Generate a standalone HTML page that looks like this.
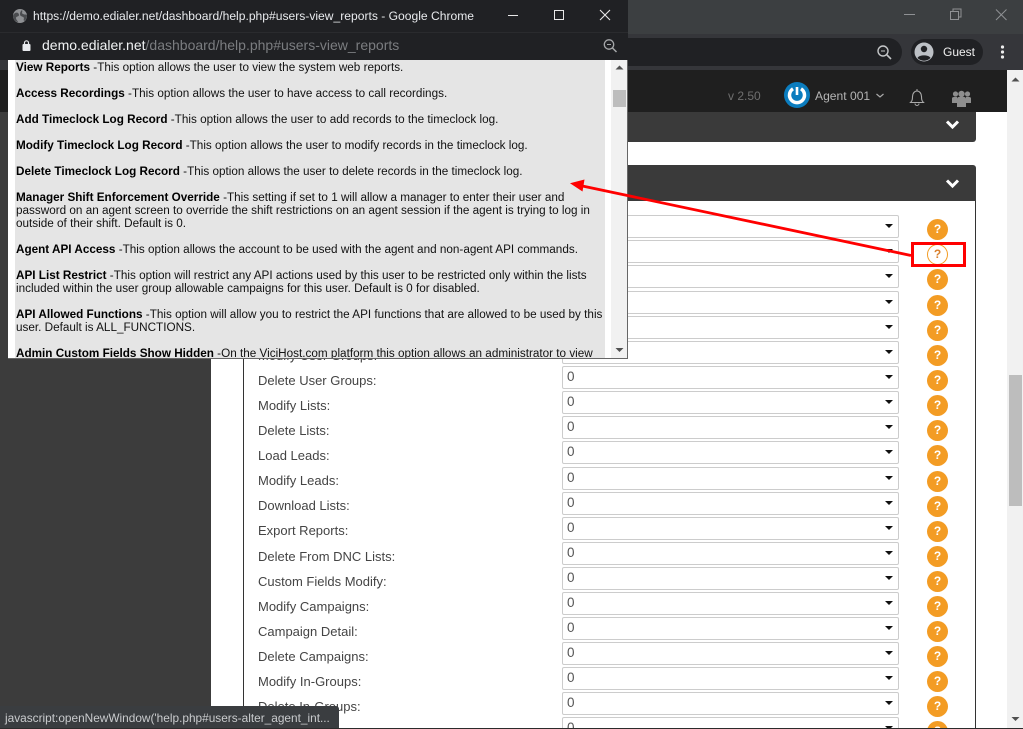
<!DOCTYPE html>
<html><head><meta charset="utf-8"><title>Help</title>
<style>
html,body{margin:0;padding:0;width:1023px;height:729px;overflow:hidden;background:#fff}
#w{position:absolute;left:0;top:0;width:1023px;height:729px;overflow:hidden;background:#fff}
#w div,#w span,#w svg{position:absolute}
.lb{left:258px;font:13px/16px "Liberation Sans",sans-serif;color:#444;white-space:nowrap;height:16px}
.sl{left:562px;width:335px;height:21px;border:1px solid #ccc;border-radius:2px;background:#fff;font:13.5px/20px "Liberation Sans",sans-serif;color:#555}
.sl b{position:absolute;left:4px;top:0;font-weight:normal}
.sl i{position:absolute;right:5px;top:8px;width:0;height:0;border-left:4px solid transparent;border-right:4px solid transparent;border-top:4px solid #111}
.q{left:927px;width:21px;height:21px;border-radius:50%;background:#f39c24;color:#fff;font:bold 12px/21px "Liberation Sans",sans-serif;text-align:center}
.p{left:1px;font:11.72px/13px "Liberation Sans",sans-serif;color:#111;white-space:nowrap}
.p strong{font-weight:bold;color:#000}
.chrome{font-family:"Liberation Sans",sans-serif;white-space:nowrap}
</style></head><body><div id="w">

<!-- main window chrome -->
<div style="left:0;top:0;width:1023px;height:34px;background:#3c3f41"></div>
<div style="left:0;top:34px;width:1023px;height:36px;background:#35363a"></div>
<div style="left:600px;top:38px;width:302px;height:28px;background:#202124;border-radius:14px"></div>
<div style="left:911px;top:39px;width:72px;height:26px;background:#202124;border-radius:13px"></div>
<svg style="left:0;top:0" width="1023" height="70" viewBox="0 0 1023 70" fill="none">
<path d="M904 14.500h11" stroke="#8f9194" stroke-width="1"/>
<path d="M950.500 11.500h8v8h-8zM953 11.500v-2.500h8v8h-2.500" stroke="#8f9194" stroke-width="1"/>
<path d="M996 9.500l10.500 10.500M1006.500 9.500L996 20" stroke="#8f9194" stroke-width="1"/>
<circle cx="883" cy="51" r="5" stroke="#c4c6c8" stroke-width="1.400"/><path d="M887 55l4 4" stroke="#c4c6c8" stroke-width="1.600"/><path d="M881 51h4" stroke="#c4c6c8"/>
<circle cx="924" cy="52" r="9.500" fill="#bdc1c6"/><circle cx="924" cy="49" r="3.200" fill="#202124"/><path d="M917.500 58c1.500-3.500 11.500-3.500 13 0a9 9 0 0 1-13 0z" fill="#202124"/>
<circle cx="1002.500" cy="47" r="1.600" fill="#eee"/><circle cx="1002.500" cy="52" r="1.600" fill="#eee"/><circle cx="1002.500" cy="57" r="1.600" fill="#eee"/>
</svg>
<div class="chrome" style="left:943px;top:44px;font-size:12px;line-height:16px;color:#f0f0f0">Guest</div>

<!-- app header -->
<div style="left:0;top:70px;width:1007px;height:42px;background:#1f1f1f"></div>
<div class="chrome" style="left:728px;top:88px;font-size:12px;line-height:16px;color:#6f6f6f">v 2.50</div>
<svg style="left:784px;top:82px" width="26" height="26" viewBox="0 0 26 26" fill="none">
<circle cx="13" cy="13" r="13" fill="#0b7dbf"/>
<path d="M9 6.800a7.500 7.500 0 1 0 8 0" stroke="#fff" stroke-width="3.500"/><path d="M13 5v8" stroke="#fff" stroke-width="2.600"/>
</svg>
<div class="chrome" style="left:815px;top:88px;font-size:12.100px;line-height:16px;color:#b5b5b5">Agent 001</div>
<svg style="left:875px;top:92px" width="10" height="8" viewBox="0 0 10 8" fill="none"><path d="M1.500 2l3.500 3 3.500-3" stroke="#aaa" stroke-width="1.200"/></svg>
<svg style="left:908px;top:88px" width="18" height="19" viewBox="0 0 18 19" fill="none">
<path d="M2.500 14.500c1.500-1.500 2-2.500 2-6 0-3 2-5.500 4.500-5.500s4.500 2.500 4.500 5.500c0 3.500.5 4.500 2 6z" stroke="#aaa" stroke-width="1.100"/>
<path d="M7 15.500a2 2 0 0 0 4 0" stroke="#aaa"/><path d="M9 1v2" stroke="#aaa"/>
</svg>
<svg style="left:952px;top:90px" width="19" height="17" viewBox="0 0 19 17" fill="#8e8e8e">
<circle cx="3.500" cy="4" r="2.600"/><circle cx="15.500" cy="4" r="2.600"/><circle cx="9.500" cy="4" r="3.200"/>
<path d="M0 8.500q0-1.500 2-1.500h3v6H0zM14 7h3q2 0 2 1.500V13h-5z"/><path d="M5 9q0-2 2-2h5q2 0 2 2v8H5z"/>
</svg>

<!-- sidebar -->
<div style="left:0;top:112px;width:211px;height:617px;background:#3c3c3c"></div>

<!-- panels -->
<div style="left:244px;top:112px;width:732px;height:30px;background:#3a3a3a;border-radius:0 0 3px 3px"></div>
<svg style="left:945px;top:119px" width="15" height="11" viewBox="0 0 15 11" fill="none"><path d="M2 2.500l5.500 5.500 5.500-5.500" stroke="#fff" stroke-width="3"/></svg>
<div style="left:243px;top:165px;width:733px;height:36px;background:#3a3a3a;border-radius:3px 3px 0 0"></div>
<svg style="left:945px;top:178px" width="15" height="11" viewBox="0 0 15 11" fill="none"><path d="M2 2.500l5.500 5.500 5.500-5.500" stroke="#fff" stroke-width="3"/></svg>
<div style="left:243px;top:201px;width:1px;height:528px;background:#333"></div>
<div style="left:975px;top:201px;width:1px;height:528px;background:#333"></div>

<!-- labels -->
<div class="lb" style="top:348px">Modify User Groups:</div>
<div class="lb" style="top:373px">Delete User Groups:</div>
<div class="lb" style="top:398px">Modify Lists:</div>
<div class="lb" style="top:423px">Delete Lists:</div>
<div class="lb" style="top:448px">Load Leads:</div>
<div class="lb" style="top:473px">Modify Leads:</div>
<div class="lb" style="top:498px">Download Lists:</div>
<div class="lb" style="top:523px">Export Reports:</div>
<div class="lb" style="top:549px">Delete From DNC Lists:</div>
<div class="lb" style="top:574px">Custom Fields Modify:</div>
<div class="lb" style="top:599px">Modify Campaigns:</div>
<div class="lb" style="top:624px">Campaign Detail:</div>
<div class="lb" style="top:649px">Delete Campaigns:</div>
<div class="lb" style="top:674px">Modify In-Groups:</div>
<div class="lb" style="top:699px">Delete In-Groups:</div>

<!-- selects -->
<div class="sl" style="top:215px"><b>0</b><i></i></div>
<div class="sl" style="top:240px"><b>0</b><i></i></div>
<div class="sl" style="top:265px"><b>0</b><i></i></div>
<div class="sl" style="top:291px"><b>0</b><i></i></div>
<div class="sl" style="top:316px"><b>0</b><i></i></div>
<div class="sl" style="top:341px"><b>0</b><i></i></div>
<div class="sl" style="top:366px"><b>0</b><i></i></div>
<div class="sl" style="top:391px"><b>0</b><i></i></div>
<div class="sl" style="top:416px"><b>0</b><i></i></div>
<div class="sl" style="top:441px"><b>0</b><i></i></div>
<div class="sl" style="top:467px"><b>0</b><i></i></div>
<div class="sl" style="top:492px"><b>0</b><i></i></div>
<div class="sl" style="top:517px"><b>0</b><i></i></div>
<div class="sl" style="top:542px"><b>0</b><i></i></div>
<div class="sl" style="top:567px"><b>0</b><i></i></div>
<div class="sl" style="top:592px"><b>0</b><i></i></div>
<div class="sl" style="top:617px"><b>0</b><i></i></div>
<div class="sl" style="top:642px"><b>0</b><i></i></div>
<div class="sl" style="top:667px"><b>0</b><i></i></div>
<div class="sl" style="top:692px"><b>0</b><i></i></div>
<div class="sl" style="top:717px"><b>0</b><i></i></div>

<!-- help icons -->
<div class="q" style="top:219px">?</div>
<div class="q" style="top:244px;background:#fff;color:#d9812f;box-sizing:border-box;border:1px solid #f39c24;line-height:19px">?</div>
<div class="q" style="top:269px">?</div>
<div class="q" style="top:295px">?</div>
<div class="q" style="top:320px">?</div>
<div class="q" style="top:345px">?</div>
<div class="q" style="top:370px">?</div>
<div class="q" style="top:395px">?</div>
<div class="q" style="top:420px">?</div>
<div class="q" style="top:445px">?</div>
<div class="q" style="top:471px">?</div>
<div class="q" style="top:496px">?</div>
<div class="q" style="top:521px">?</div>
<div class="q" style="top:546px">?</div>
<div class="q" style="top:571px">?</div>
<div class="q" style="top:596px">?</div>
<div class="q" style="top:621px">?</div>
<div class="q" style="top:646px">?</div>
<div class="q" style="top:671px">?</div>
<div class="q" style="top:696px">?</div>
<div class="q" style="top:721px">?</div>

<!-- page scrollbar -->
<div style="left:1007px;top:70px;width:16px;height:659px;background:#f1f1f1"></div>
<div style="left:1009px;top:375px;width:13px;height:131px;background:#bdbdbd"></div>
<svg style="left:1009px;top:76px" width="13" height="8" viewBox="0 0 13 8"><path d="M6.500 1.500l4 4h-8z" fill="#505050"/></svg>
<svg style="left:1009px;top:715px" width="13" height="8" viewBox="0 0 13 8"><path d="M2.500 2h8l-4 4z" fill="#505050"/></svg>

<!-- popup window -->
<div style="left:8px;top:60px;width:620px;height:299px;background:#fff"></div>
<div style="left:0;top:0;width:628px;height:32px;background:#202124"></div>
<div style="left:0;top:32px;width:628px;height:28px;background:#202124;border-top:1px solid #2a2b2e;box-sizing:border-box"></div>
<svg style="left:12px;top:8px" width="16" height="16" viewBox="0 0 16 16">
<circle cx="8" cy="8" r="7" fill="#8f9194"/><path d="M3 5c2-1 4 0 4 2s-3 1-3 3 2 3 2 4c-3-.5-5-3-5-6 0-1 1-2 2-3zM10 2c1 2-1 3 1 4s3 0 4 1c0 3-1 5-3 6-1-2 1-3-1-4s-3-1-3-3 1-3 2-4z" fill="#4a4c4f"/>
</svg>
<div class="chrome" style="left:33px;top:8px;font-size:12.100px;line-height:16px;color:#e8eaed">https://demo.edialer.net/dashboard/help.php#users-view_reports - Google Chrome</div>
<svg style="left:500px;top:5px" width="120" height="22" viewBox="0 0 120 22" fill="none">
<path d="M8 10.500h10" stroke="#e8e8e8" stroke-width="1"/>
<path d="M54.500 5.500h9v9h-9z" stroke="#e8e8e8" stroke-width="1"/>
<path d="M100 5l10 10M110 5l-10 10" stroke="#e8e8e8" stroke-width="1.100"/>
</svg>
<svg style="left:21px;top:39px" width="12" height="13" viewBox="0 0 12 13"><rect x="1.500" y="5" width="8" height="7" rx="1" fill="#e8eaed"/><path d="M3.500 5.500V3.800a2 2 0 0 1 4 0v1.700" fill="none" stroke="#e8eaed" stroke-width="1.200"/></svg>
<div class="chrome" style="left:42px;top:37px;font-size:14px;line-height:17px;color:#7b7d80"><span style="position:static;color:#f1f3f4">demo.edialer.net</span>/dashboard/help.php#users-view_reports</div>
<svg style="left:602px;top:38px" width="16" height="16" viewBox="0 0 16 16" fill="none"><circle cx="7" cy="6.500" r="4.700" stroke="#a5a7a9" stroke-width="1.300"/><path d="M5 6.500h4" stroke="#a5a7a9"/><path d="M10.500 10l4 4" stroke="#a5a7a9" stroke-width="1.500"/></svg>

<div style="left:611px;top:60px;width:16px;height:298px;background:#f1f1f1"></div>
<div style="left:613px;top:90px;width:13px;height:17px;background:#bdbdbd"></div>
<svg style="left:613px;top:64px" width="13" height="8" viewBox="0 0 13 8"><path d="M6.500 1.500l4 4h-8z" fill="#505050"/></svg>
<svg style="left:613px;top:346px" width="13" height="8" viewBox="0 0 13 8"><path d="M2.500 2h8l-4 4z" fill="#505050"/></svg>
<div style="left:8px;top:358px;width:620px;height:1px;background:#666"></div>
<div style="left:627px;top:60px;width:1px;height:299px;background:#666"></div>

<div style="left:15px;top:60px;width:590px;height:298px;overflow:hidden;background:#e5e5e5">
<div class="p" style="top:1px"><strong>View Reports</strong> -This option allows the user to view the system web reports.</div>
<div class="p" style="top:27px"><strong>Access Recordings</strong> -This option allows the user to have access to call recordings.</div>
<div class="p" style="top:53px"><strong>Add Timeclock Log Record</strong> -This option allows the user to add records to the timeclock log.</div>
<div class="p" style="top:79px"><strong>Modify Timeclock Log Record</strong> -This option allows the user to modify records in the timeclock log.</div>
<div class="p" style="top:105px"><strong>Delete Timeclock Log Record</strong> -This option allows the user to delete records in the timeclock log.</div>
<div class="p" style="top:131px"><strong>Manager Shift Enforcement Override</strong> -This setting if set to 1 will allow a manager to enter their user and<br>password on an agent screen to override the shift restrictions on an agent session if the agent is trying to log in<br>outside of their shift. Default is 0.</div>
<div class="p" style="top:183px"><strong>Agent API Access</strong> -This option allows the account to be used with the agent and non-agent API commands.</div>
<div class="p" style="top:209px"><strong>API List Restrict</strong> -This option will restrict any API actions used by this user to be restricted only within the lists<br>included within the user group allowable campaigns for this user. Default is 0 for disabled.</div>
<div class="p" style="top:248px"><strong>API Allowed Functions</strong> -This option will allow you to restrict the API functions that are allowed to be used by this<br>user. Default is ALL_FUNCTIONS.</div>
<div class="p" style="top:287px"><strong>Admin Custom Fields Show Hidden</strong> -On the ViciHost.com platform this option allows an administrator to view</div>
</div>

<!-- annotation -->
<svg style="left:0;top:0" width="1023" height="729" viewBox="0 0 1023 729" fill="none">
<path d="M911 255.500L580 185.500" stroke="#f00" stroke-width="2.800"/>
<path d="M570 183.300l14.500-3.800-2 12z" fill="#f00"/>
<rect x="912.500" y="243.500" width="52" height="22" stroke="#f00" stroke-width="3"/>
</svg>

<!-- status bubble -->
<div style="left:0;top:706px;width:339px;height:23px;background:#3a3d40;border-radius:0 3px 0 0"></div>
<div class="chrome" style="left:5px;top:711px;font-size:11.850px;line-height:15px;color:#c9cbcd">javascript:openNewWindow('help.php#users-alter_agent_int...</div>
<div style="left:0;top:728px;width:1023px;height:1px;background:#2b2b2b"></div>
</div></body></html>
